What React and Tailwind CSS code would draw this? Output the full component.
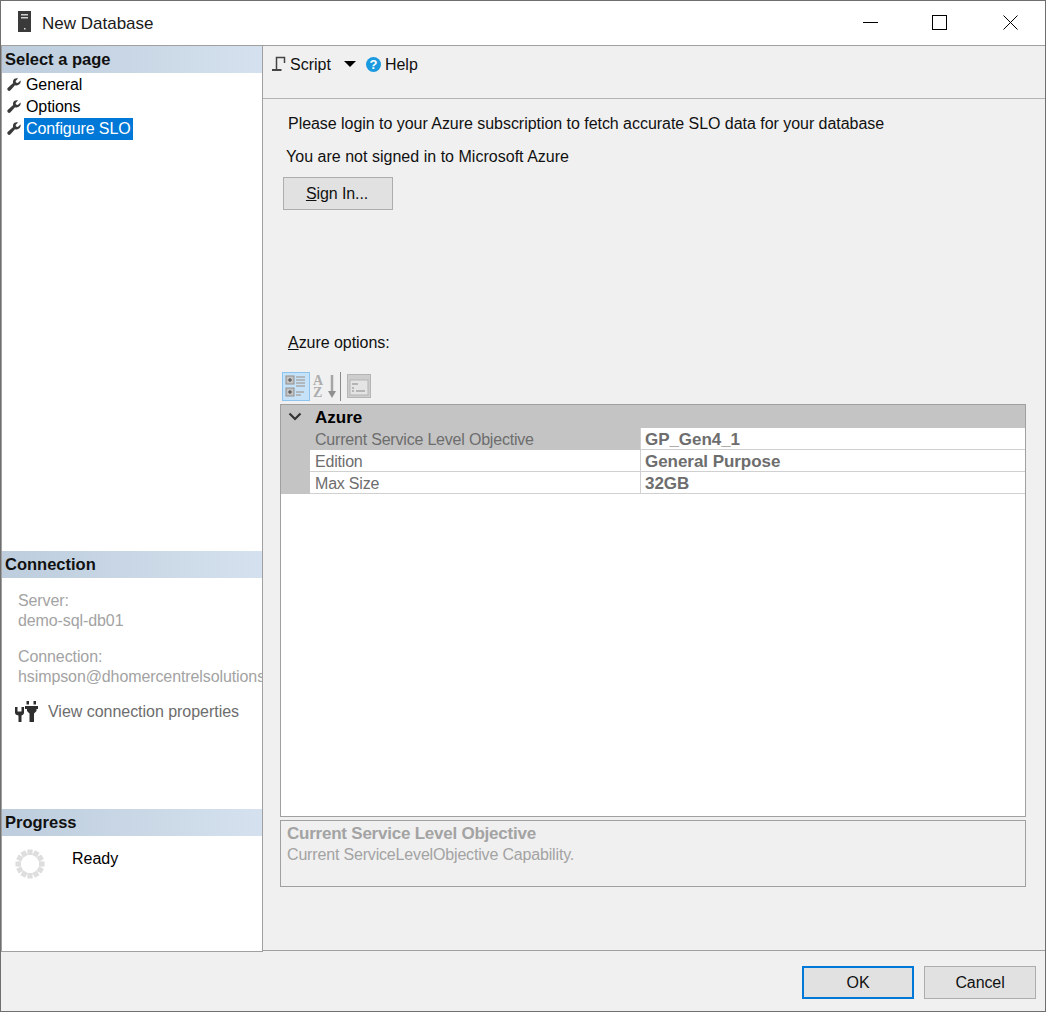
import React from 'react';

function Wrench() {
  return (
    <svg width="14" height="14" viewBox="0 0 14 14" className="shrink-0">
      <path d="M13.500 2.500 10.800 5 9 4.600 8.600 2.900 11 .6C9 -.1 6.900.8 6.200 2.600 5.900 3.500 5.900 4.300 6.200 5L.9 9.700C0 10.500.2 11.800 1 12.500 1.800 13.200 2.900 13 3.500 12.200L8 7.200c1.700.7 3.500.2 4.600-1.100.9-1 1.300-2.400.9-3.600Z" fill="#3a3a3a" />
    </svg>
  );
}

function SectionHeader({ children }) {
  return (
    <div className="h-[27px] shrink-0 pl-[3px] flex items-center bg-linear-to-r from-[#bdcddd] to-[#d5e1ee] font-bold text-[16.5px] text-[#111]">
      {children}
    </div>
  );
}

function PageItem({ label, selected }) {
  return (
    <div className="h-[22px] flex items-center pl-[5px] tracking-[-0.1px]">
      <Wrench />
      <span className={selected ? 'ml-[3px] px-[2px] h-[22px] leading-[22px] bg-[#0078d7] text-white' : 'ml-[3px] px-[2px] text-black'}>{label}</span>
    </div>
  );
}

function Spinner() {
  const segs = Array.from({ length: 12 }, (_, i) => i * 30);
  return (
    <svg width="30" height="30" viewBox="0 0 30 30">
      {segs.map((a) => (
        <rect key={a} x="12.400" y="0.500" width="5.200" height="5.500" fill="#dedede" transform={`rotate(${a} 15 15)`} />
      ))}
    </svg>
  );
}

function Row({ name, value, selected }) {
  return (
    <div className="flex h-[22px] leading-[23px]">
      <div className="w-[29px] shrink-0 bg-[#c4c4c4]" />
      <div className={selected ? 'w-[330px] shrink-0 pl-[5px] bg-[#c4c4c4] text-[#6d6d6d] tracking-[-0.2px]' : 'w-[330px] shrink-0 pl-[5px] bg-white text-[#6d6d6d] tracking-[-0.2px] border-b border-[#d0d0d0]'}>{name}</div>
      <div className="flex-1 pl-[4px] bg-white font-bold text-[17px] tracking-[-0.05px] text-[#6d6d6d] border-b border-l border-[#d0d0d0]">{value}</div>
    </div>
  );
}

export default function App() {
  return (
    <div className="w-[1046px] h-[1012px] flex flex-col border border-[#6f6f6f] bg-[#f0f0f0] text-[16px] overflow-hidden font-['Liberation_Sans',sans-serif]">
      {/* title bar */}
      <div className="h-[45px] shrink-0 bg-white flex items-center text-[#1a1a1a] border-b border-[#a0a0a0]">
        <svg width="16" height="24" viewBox="0 0 16 24" className="ml-[16px] -mt-[2px]">
          <rect x="1" y="1" width="13" height="21" fill="#3a3a3a" />
          <rect x="4" y="4" width="7" height="1.500" fill="#cfcfcf" />
          <rect x="4" y="7" width="7" height="1.500" fill="#cfcfcf" />
          <rect x="7" y="18" width="1.500" height="1.500" fill="#dcdcdc" />
        </svg>
        <span className="ml-[9px] mt-[1px] text-[17px]">New Database</span>
        <div className="ml-auto -mt-[1px] flex items-center">
          <div className="w-[65px] h-[44px] flex items-center justify-center">
            <div className="w-[15px] h-px bg-black" />
          </div>
          <div className="w-[73px] h-[44px] flex items-center justify-center">
            <div className="w-[15px] h-[15px] border border-black" />
          </div>
          <div className="w-[69px] h-[44px] flex items-center justify-center">
            <svg width="15" height="15" viewBox="0 0 15 15"><path d="M.5.5l14 14M14.500.5l-14 14" stroke="#000" strokeWidth="1" /></svg>
          </div>
        </div>
      </div>

      <div className="h-[906px] shrink-0 flex items-start">
        {/* left panel */}
        <div className="w-[262px] h-[906px] shrink-0 bg-white border-l border-r border-b border-[#a0a0a0] flex flex-col">
          <div className="h-[505px] shrink-0">
            <SectionHeader>Select a page</SectionHeader>
            <div className="pt-[1px]">
              <PageItem label="General" />
              <PageItem label="Options" />
              <PageItem label="Configure SLO" selected />
            </div>
          </div>
          <div className="h-[258px] shrink-0 overflow-hidden">
            <SectionHeader>Connection</SectionHeader>
            <div className="pl-[16px] pt-[13px] text-[#a3a3a3] leading-[20px] tracking-[-0.1px]">
              <div>Server:</div>
              <div>demo-sql-db01</div>
              <div className="mt-[16px]">Connection:</div>
              <div className="whitespace-nowrap">hsimpson@dhomercentrelsolutions</div>
            </div>
            <div className="flex items-center pl-[12px] mt-[13px] text-[#6d6d6d]">
              <svg width="24" height="24" viewBox="0 0 24 24" className="shrink-0">
                <path d="M1 7h2.500v4.500h4V7H10v5.500c0 1.500-1 2.500-2.500 3V22h-3v-6.500C2 15 1 14 1 12.500Z" fill="#2e2e2e" />
                <path d="M12.500 1h2.500v3.500h-2.500ZM19.500 1H22v3.500h-2.500ZM11 6h13v3h-1.500v2l-2.500 2.500V22h-4.500v-8.500L13 11V9h-2Z" fill="#2e2e2e" />
              </svg>
              <span className="ml-[10px] tracking-[-0.03px]">View connection properties</span>
            </div>
          </div>
          <div className="flex-1">
            <SectionHeader>Progress</SectionHeader>
            <div className="flex pl-[13px] pt-[13px]">
              <Spinner />
              <span className="ml-[27px] -mt-[2px] text-black">Ready</span>
            </div>
          </div>
        </div>

        {/* right panel */}
        <div className="flex-1 h-[905px] flex flex-col min-w-0 border-b border-[#a0a0a0]">
          <div className="h-[53px] shrink-0 border-b border-[#b4b4b4] flex items-start pt-[7px] pl-[8px] text-[#111]">
            <svg width="16" height="16" viewBox="0 0 16 16" className="mt-[3px] shrink-0">
              <path d="M5.500 13V1.500H13.500V7" stroke="#444" strokeWidth="1.500" fill="none" />
              <path d="M1 14h9.500" stroke="#444" strokeWidth="2" fill="none" />
            </svg>
            <span className="ml-[3px]">Script</span>
            <div className="ml-[13px] mt-[8px] w-0 h-0 border-l-[6px] border-r-[6px] border-t-[6px] border-l-transparent border-r-transparent border-t-black" />
            <div className="ml-[10px] mt-[4px] w-[15px] h-[15px] rounded-full bg-[#1c9ae0] text-white text-[13px] font-bold leading-[15px] text-center">?</div>
            <span className="ml-[4px]">Help</span>
          </div>

          <div className="flex-1 flex flex-col pl-[17px] pr-[19px] text-[#111]">
            <div className="pl-[8px] pt-[15px] leading-[20px] tracking-[-0.04px]">Please login to your Azure subscription to fetch accurate SLO data for your database</div>
            <div className="pl-[6px] pt-[13px] leading-[20px] tracking-[0.02px]">You are not signed in to Microsoft Azure</div>
            <button className="ml-[3px] mt-[10px] w-[110px] h-[33px] pr-[2px] bg-[#e1e1e1] border border-[#adadad] text-[#111] tracking-[-0.1px]">
              <span className="underline">S</span>ign In...
            </button>
            <div className="pl-[8px] mt-[123px] leading-[20px] tracking-[-0.05px]"><span className="underline">A</span>zure options:</div>

            <div className="h-[30px] mt-[18px] flex items-center pl-[2px]">
              <div className="w-[28px] h-[29px] bg-[#c6e2f8] border border-[#8cc4f0] flex items-center justify-center">
                <svg width="22" height="24" viewBox="0 0 22 24">
                  <rect x="1" y="2" width="8" height="8" fill="#c4c4c4" stroke="#8f8f8f" />
                  <rect x="1" y="14" width="8" height="8" fill="#c4c4c4" stroke="#8f8f8f" />
                  <path d="M3 6h4M5 4v4M3 18h4M5 16v4" stroke="#444" />
                  <path d="M11 3h9M11 6h9M11 9h9M11 12h9M11 18h8M11 21h5" stroke="#a9a9a9" strokeWidth="1.500" />
                </svg>
              </div>
              <div className="w-[27px] h-[29px] relative text-[#adadad] font-bold text-[14px] leading-[12px] font-['Liberation_Serif',serif] pl-[3px] pt-[3px]">
                <div>A</div>
                <div>Z</div>
                <svg width="10" height="26" viewBox="0 0 10 26" className="absolute right-[0px] top-[2px]">
                  <path d="M5 1v19" stroke="#a5a5a5" strokeWidth="2.500" />
                  <path d="M1 17h8l-4 7Z" fill="#909090" />
                </svg>
              </div>
              <div className="w-px h-[29px] bg-[#8a8a8a] ml-[3px]" />
              <svg width="24" height="24" viewBox="0 0 24 24" className="ml-[6px]">
                <rect x="0.500" y="0.500" width="23" height="23" fill="#cdcdcd" stroke="#b5b5b5" />
                <rect x="3" y="6" width="18" height="15" fill="#e4e4e4" stroke="#b5b5b5" />
                <path d="M5 10h6M5 14h2M5 17h2M9 17h9" stroke="#a5a5a5" strokeWidth="1.500" />
              </svg>
            </div>

            <div className="mt-[3px] h-[413px] shrink-0 border border-[#a0a0a0] bg-white flex flex-col">
              <div className="h-[23px] shrink-0 bg-[#c4c4c4] flex items-center font-bold text-[17px] text-black">
                <svg width="14" height="10" viewBox="0 0 14 10" className="ml-[7px]">
                  <path d="M1.500 1.500 7 7l5.500-5.500" stroke="#333" strokeWidth="2.200" fill="none" />
                </svg>
                <span className="ml-[13px] mt-[2px]">Azure</span>
              </div>
              <Row name="Current Service Level Objective" value="GP_Gen4_1" selected />
              <Row name="Edition" value="General Purpose" />
              <Row name="Max Size" value="32GB" />
            </div>

            <div className="mt-[3px] h-[67px] shrink-0 border border-[#a0a0a0] pl-[6px] pt-[2px] text-[#a3a3a3] leading-[21px]">
              <div className="font-bold text-[17px] tracking-[-0.23px]">Current Service Level Objective</div>
              <div className="tracking-[-0.17px]">Current ServiceLevelObjective Capability.</div>
            </div>
          </div>
        </div>
      </div>

      {/* footer */}
      <div className="flex-1 flex justify-end items-start pt-[14px] pr-[9px] gap-[10px] text-[#111]">
        <button className="w-[112px] h-[33px] bg-[#e1e1e1] border-2 border-[#0078d7]">OK</button>
        <button className="w-[112px] h-[33px] bg-[#e1e1e1] border border-[#adadad] tracking-[-0.1px]">Cancel</button>
      </div>
    </div>
  );
}
